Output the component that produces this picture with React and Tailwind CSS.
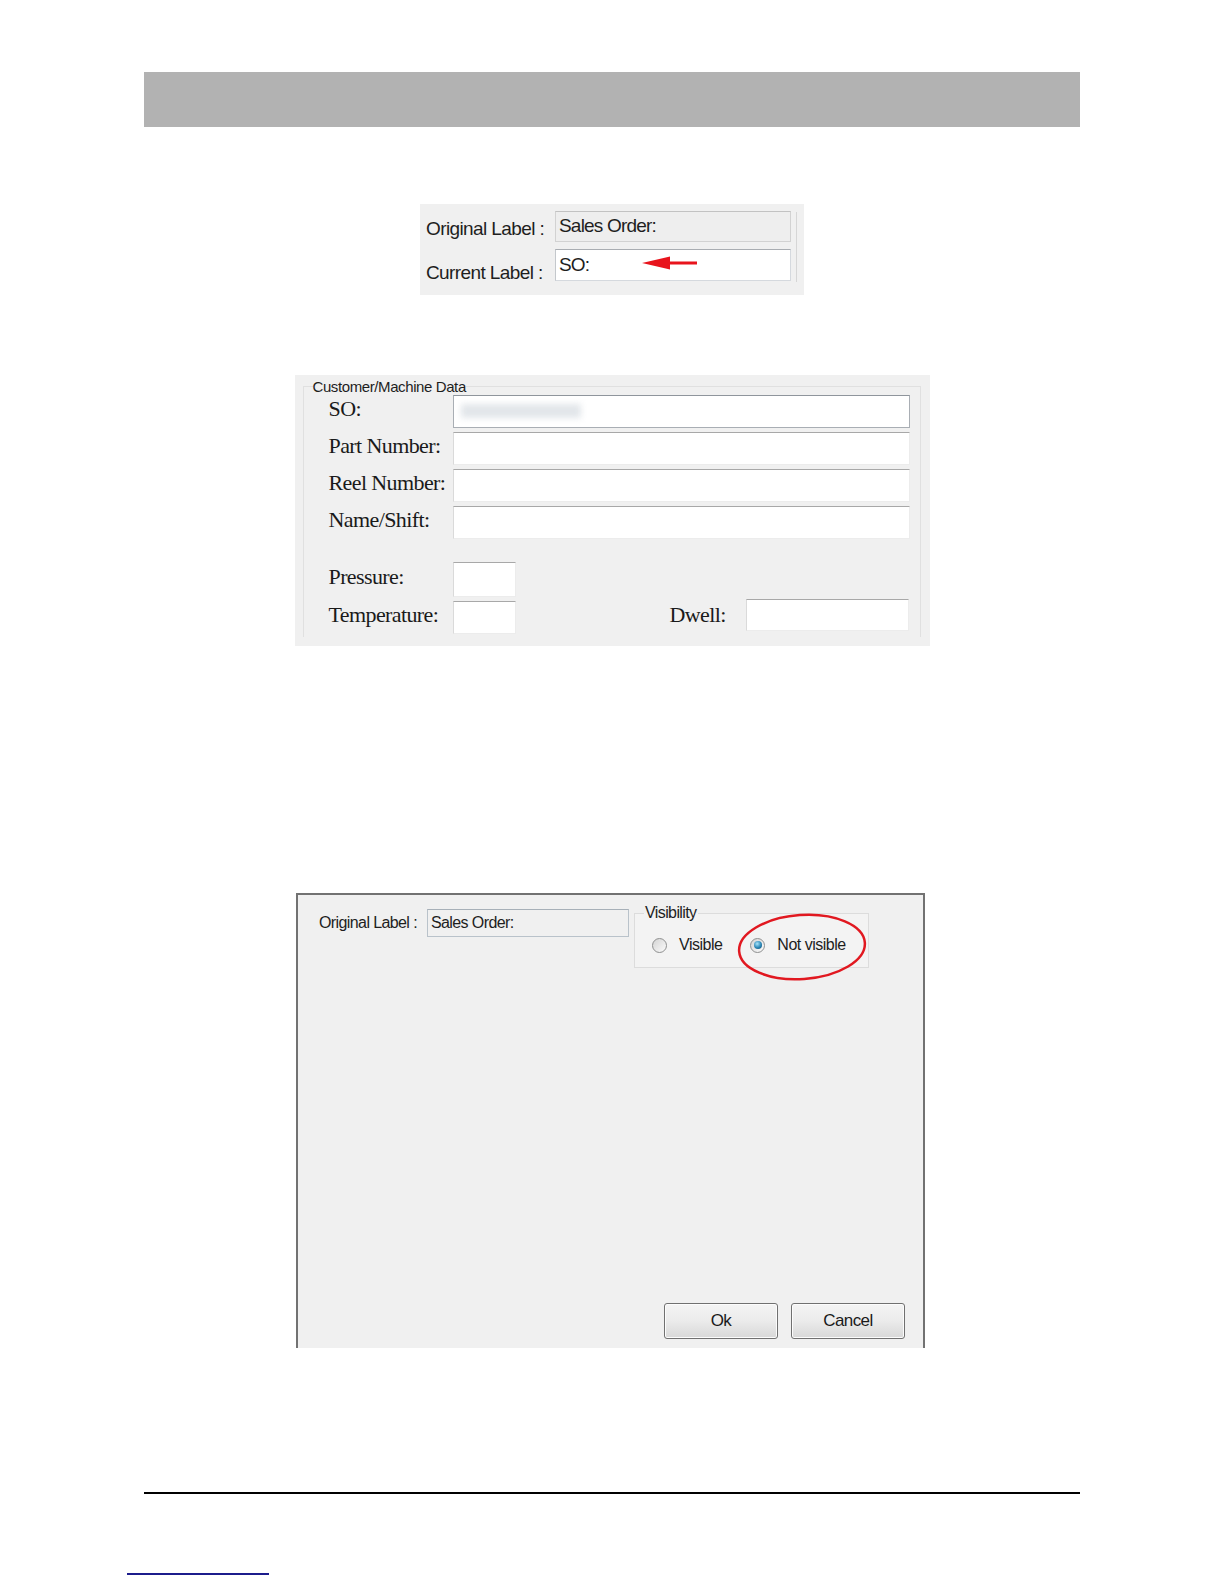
import React from "react";

const ui = { fontFamily: '"Liberation Sans", Arial, sans-serif' };
const serif = { fontFamily: '"Liberation Serif", "Times New Roman", serif' };

const Radio = ({ checked }) => (
  <span className="w-[15px] h-[15px] rounded-full border border-[#8e8f8f] bg-linear-to-br from-[#d4d4d4] to-[#fbfbfb] flex items-center justify-center shrink-0">
    {checked && (
      <span className="w-[8px] h-[8px] rounded-full bg-[radial-gradient(circle_at_40%_35%,#a8e4fb,#2a86b5_55%,#0e4468)]" />
    )}
  </span>
);

const WinButton = ({ children }) => (
  <button className="w-[114px] h-[36px] rounded-[3px] border border-[#707070] bg-linear-to-b from-[#f4f4f4] via-[#ebebeb] to-[#d8d8d8] text-[17px] tracking-[-0.6px] text-[#1a1a1a] shadow-[inset_0_0_0_1px_#fcfcfc]">
    {children}
  </button>
);

const LabelRename = () => (
  <div
    className="relative w-[384px] h-[91px] bg-[#f0f0f0] flex pl-[6px] pt-[7px] text-[#1e1e1e]"
    style={ui}
  >
    <div className="flex flex-col gap-[7px]">
      <div className="flex items-center h-[31px]">
        <span className="w-[129px] text-[19px] tracking-[-0.6px] pt-[6px]">Original Label :</span>
        <div className="w-[236px] h-[31px] bg-[#eeeeee] border border-[#d2d2d2] border-t-[#c2c2c2] flex items-center pl-[3px] text-[19px] tracking-[-0.8px]">
          Sales Order:
        </div>
      </div>
      <div className="flex items-center h-[32px]">
        <span className="w-[129px] text-[19px] tracking-[-0.6px] pt-[16px]">Current Label :</span>
        <div className="w-[236px] h-[32px] bg-white border border-[#d5d9de] border-t-[#a9adb2] border-l-[#c4c8cc] flex items-start pt-[1px] pl-[3px] text-[19px] tracking-[-0.8px]">
          SO:
        </div>
      </div>
    </div>
    <div className="ml-[5px] mt-[1px] w-px h-[70px] bg-[#d6d6d6]" />
    <svg className="absolute left-[222px] top-[51px]" width="56" height="16" viewBox="0 0 56 16">
      <line x1="22" y1="8" x2="55" y2="8" stroke="#e8141c" strokeWidth="3" />
      <polygon points="0,8 28,1.5 28,14.5" fill="#e8141c" />
    </svg>
  </div>
);

const DataInput = ({ w, h = "h-[33px]", strong }) => (
  <div
    className={`${w} ${h} bg-white border ${
      strong
        ? "border-[#a9aeb4] border-t-[#8f959c]"
        : "border-[#ececec] border-t-[#a8a8a8] border-l-[#dadada]"
    }`}
  />
);

const CustomerData = () => (
  <div className="w-[635px] h-[271px] bg-[#f0f0f0] pl-[8px] pr-[9px] pt-[3px] pb-[9px]">
    <fieldset className="h-full border border-b-0 border-[#e0e0e0] px-0 pb-0 pt-0 m-0 min-w-0">
      <legend className="ml-[9px] px-0 text-[15px] leading-[17px] tracking-[-0.4px] text-[#1e1e1e]" style={ui}>
        Customer/Machine Data
      </legend>
      <div className="flex flex-col pl-[25px] pr-[10px] text-[22px] tracking-[-0.6px] text-[#1a1a1a]" style={serif}>
        <div className="flex flex-col gap-[4px]">
          {["SO:", "Part Number:", "Reel Number:", "Name/Shift:"].map((label, i) => (
            <div key={label} className="flex items-center">
              <span className="w-[124px] leading-none pb-[5px]">{label}</span>
              <div className="relative flex-1">
                <DataInput w="w-full" strong={i === 0} />
                {i === 0 && (
                  <div className="absolute left-[8px] top-[9px] w-[120px] h-[14px] bg-[#e2e6ea] blur-[3px]" />
                )}
              </div>
            </div>
          ))}
        </div>
        <div className="flex items-center mt-[23px]">
          <span className="w-[124px] leading-none pb-[5px]">Pressure:</span>
          <DataInput w="w-[63px]" h="h-[35px]" />
        </div>
        <div className="flex items-center mt-[4px]">
          <span className="w-[124px] leading-none pb-[5px]">Temperature:</span>
          <DataInput w="w-[63px]" h="h-[33px]" />
          <span className="ml-[154px] w-[76px] leading-none pb-[5px]">Dwell:</span>
          <div className="self-start -mt-[2px]">
            <DataInput w="w-[163px]" h="h-[32px]" />
          </div>
        </div>
      </div>
    </fieldset>
  </div>
);

const VisibilityDialog = () => (
  <div
    className="relative w-[629px] h-[455px] bg-[#f0f0f0] border-2 border-b-0 border-[#727272] flex flex-col justify-between text-[#1e1e1e]"
    style={ui}
  >
    <div className="flex items-start pl-[21px]">
      <div className="flex items-center mt-[14px]">
        <span className="w-[108px] text-[16px] tracking-[-0.6px]">Original Label :</span>
        <div className="w-[202px] h-[28px] bg-[#f0f0f0] border border-[#b9c2ca] border-t-[#a7b0b8] flex items-center pl-[3px] text-[16px] tracking-[-0.6px]">
          Sales Order:
        </div>
      </div>
      <fieldset className="ml-[5px] mt-[9px] w-[235px] h-[64px] border border-[#dcdcdc] bg-[#f3f3f3] m-0 px-0 pb-0 pt-0 min-w-0">
        <legend className="ml-[9px] px-[1px] text-[16px] leading-[18px] tracking-[-0.6px]">Visibility</legend>
        <div className="flex items-center mt-[11px] pl-[17px] text-[16px] tracking-[-0.5px]">
          <Radio />
          <span className="ml-[12px]">Visible</span>
          <span className="ml-[28px]"><Radio checked /></span>
          <span className="ml-[12px]">Not visible</span>
        </div>
      </fieldset>
    </div>
    <div className="flex justify-end gap-[13px] pr-[18px] pb-[9px]">
      <WinButton>Ok</WinButton>
      <WinButton>Cancel</WinButton>
    </div>
    <svg className="absolute left-[436px] top-[15px]" width="136" height="74" viewBox="0 0 136 74">
      <ellipse cx="68" cy="37" rx="63" ry="32" fill="none" stroke="#e11820" strokeWidth="2.5" transform="rotate(-4 68 37)" />
    </svg>
  </div>
);

export default function App() {
  return (
    <div className="w-[1224px] min-h-[1584px] bg-white flex flex-col items-center">
      <div className="mt-[72px] w-[936px] h-[55px] bg-[#b2b2b2]" />
      <div className="mt-[77px]">
        <LabelRename />
      </div>
      <div className="mt-[80px]">
        <CustomerData />
      </div>
      <div className="mt-[247px] -ml-[3px]">
        <VisibilityDialog />
      </div>
      <div className="mt-[144px] w-[936px] h-[2px] bg-black" />
      <div className="self-start ml-[127px] mt-[79px] w-[142px] h-[2px] bg-[#1c1c8c]" />
    </div>
  );
}
